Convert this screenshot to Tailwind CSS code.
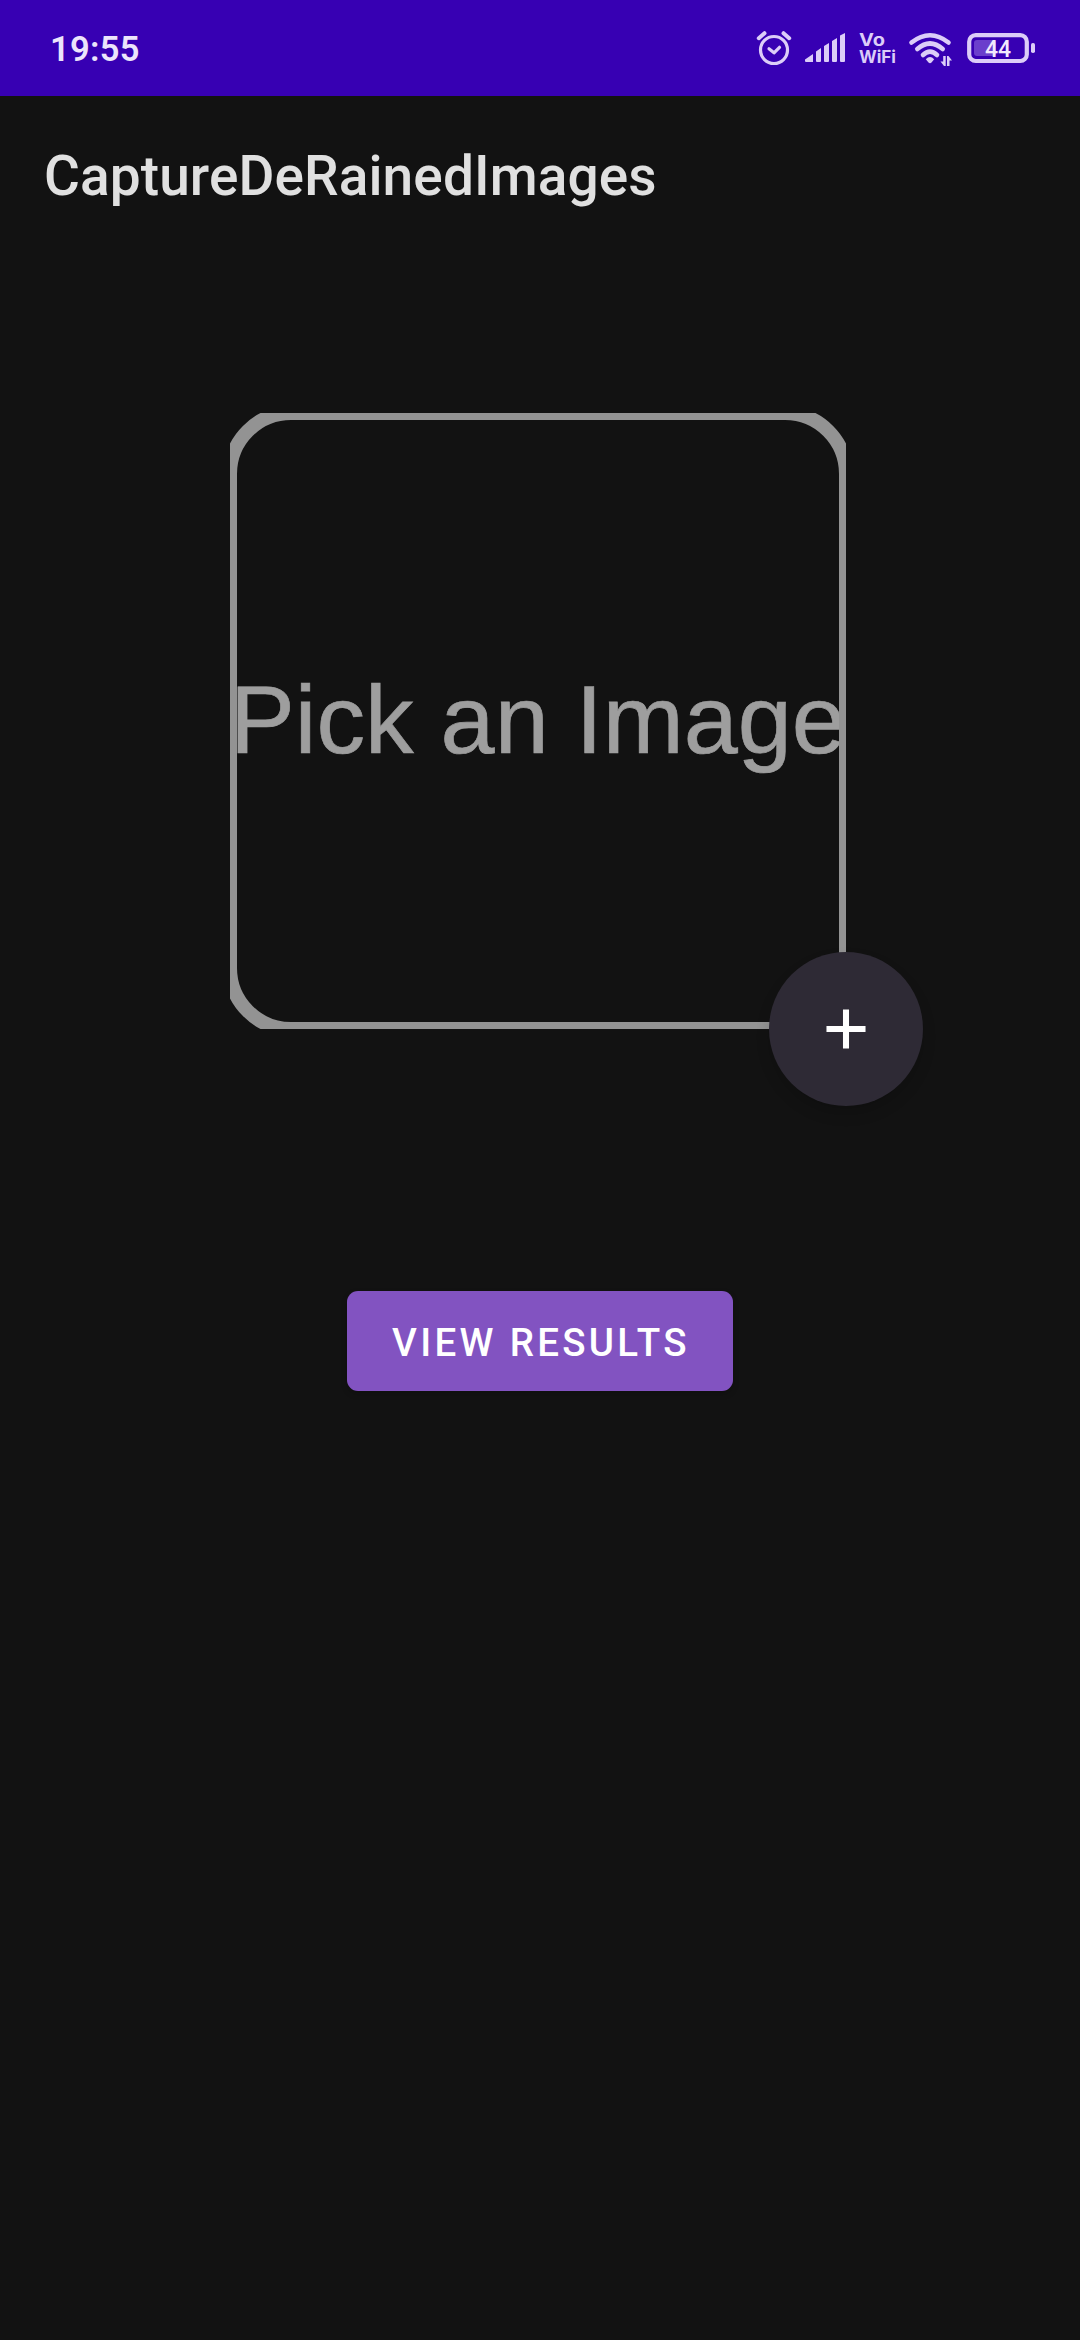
<!DOCTYPE html>
<html lang="en">
<head>
<meta charset="utf-8">
<title>CaptureDeRainedImages</title>
<script src="https://cdn.jsdelivr.net/npm/@tailwindcss/browser@4"></script>
</head>
<body class="flex h-[2340px] w-[1080px] flex-col overflow-hidden bg-[#121212] font-['Roboto',sans-serif]">
  <header class="flex h-24 shrink-0 items-center justify-between bg-[#3700b3] pr-[44px] pl-[50px] text-[#e4daf9]">
    <span class="pt-0.5 text-[34.5px] leading-none font-semibold tracking-[0.3px] text-[#ece4fc]">19:55</span>
    <svg class="h-24 w-[286px]" viewBox="750 0 286 96" fill="none" stroke="#dccdf8" stroke-linecap="round" stroke-linejoin="round">
      <g stroke-width="3.2">
        <circle cx="774" cy="50" r="13.5"/>
        <path d="M769 48.8l5 4 5.5-5.5"/>
        <path d="M758.8 38.2l5.7-5M789.2 38.2l-5.7-5" stroke-width="4"/>
      </g>
      <path stroke="none" fill="#dccdf8" d="M805 59.5L813 54V62H806Q805 62 805 61ZM816 51.5L821 48V61Q821 62 820 62H817Q816 62 816 61ZM824 46L829 43V61Q829 62 828 62H825Q824 62 824 61ZM832 41L837 38V61Q837 62 836 62H833Q832 62 832 61ZM840 35.5L845 33V61Q845 62 844 62H841Q840 62 840 61Z"/>
      <g stroke="none" fill="#dccdf8" font-family="Inter, sans-serif" font-weight="700">
        <text x="859" y="45.6" font-size="17" textLength="26" lengthAdjust="spacingAndGlyphs">Vo</text>
        <text x="859" y="63" font-size="17" textLength="37" lengthAdjust="spacingAndGlyphs">WiFi</text>
      </g>
      <g stroke-width="4.6">
        <path d="M911.5 42.5Q930 28 948.5 42.5"/>
        <path d="M917.3 49Q930 38 942.7 49"/>
        <path d="M923 55Q930 48.4 937 55"/>
      </g>
      <path stroke="none" fill="#dccdf8" d="M925.8 59.3Q930 54.6 934.2 59.3L931.5 62.4Q930 64 928.5 62.4Z"/>
      <path stroke="none" fill="#dccdf8" d="M943.2 56H945.7V66H944L940.5 61.5H943.2ZM947 56H948.5L952 60.5H949.5V66H947Z"/>
      <rect x="969.2" y="35.2" width="57.6" height="25.8" rx="6.5" stroke-width="4.2"/>
      <rect x="974" y="40" width="22" height="16" rx="3" stroke="none" fill="#6b3fcc"/>
      <rect x="1031" y="43" width="4" height="10" rx="1.8" stroke="none" fill="#dccdf8"/>
      <text x="985" y="57" font-size="23" font-weight="500" stroke="none" fill="#f1eafd" textLength="26">44</text>
    </svg>
  </header>

  <div class="flex h-[154px] shrink-0 items-center pt-1.5 pl-[44px]">
    <h1 class="text-[55px] leading-none font-medium tracking-[0.1px] text-[#e0e0e0]">CaptureDeRainedImages</h1>
  </div>

  <main class="flex flex-col items-center pt-[163px]">
    <div class="relative mr-1 h-[616px] w-[616px]">
      <svg class="block h-full w-full overflow-hidden" viewBox="0 0 616 616">
        <text x="0" y="340" font-family="Liberation Sans, Arial, sans-serif" font-size="97.2" fill="#9e9e9e" stroke="#9e9e9e" stroke-width="0.7">Pick an Image</text>
        <rect width="616" height="616" rx="61" fill="none" stroke="#939393" stroke-width="14"/>
      </svg>
      <button aria-label="Add image" class="absolute -right-[77px] -bottom-[77px] flex h-[154px] w-[154px] items-center justify-center rounded-full bg-[#2e2a35] shadow-[0_8px_14px_rgba(0,0,0,0.15)]">
        <svg class="h-[66px] w-[66px]" viewBox="0 0 24 24" fill="#fff"><path d="M19.1 13.1h-6v6h-2.2v-6h-6v-2.2h6v-6h2.2v6h6z"/></svg>
      </button>
    </div>
    <button class="mt-[262px] h-[100px] w-[386px] rounded-[11px] bg-[#8253c1] pt-1 pl-0.5 text-[38.5px] leading-none font-medium tracking-[0.086em] text-white shadow-[0_3px_6px_rgba(0,0,0,0.2)]">VIEW RESULTS</button>
  </main>
</body>
</html>
